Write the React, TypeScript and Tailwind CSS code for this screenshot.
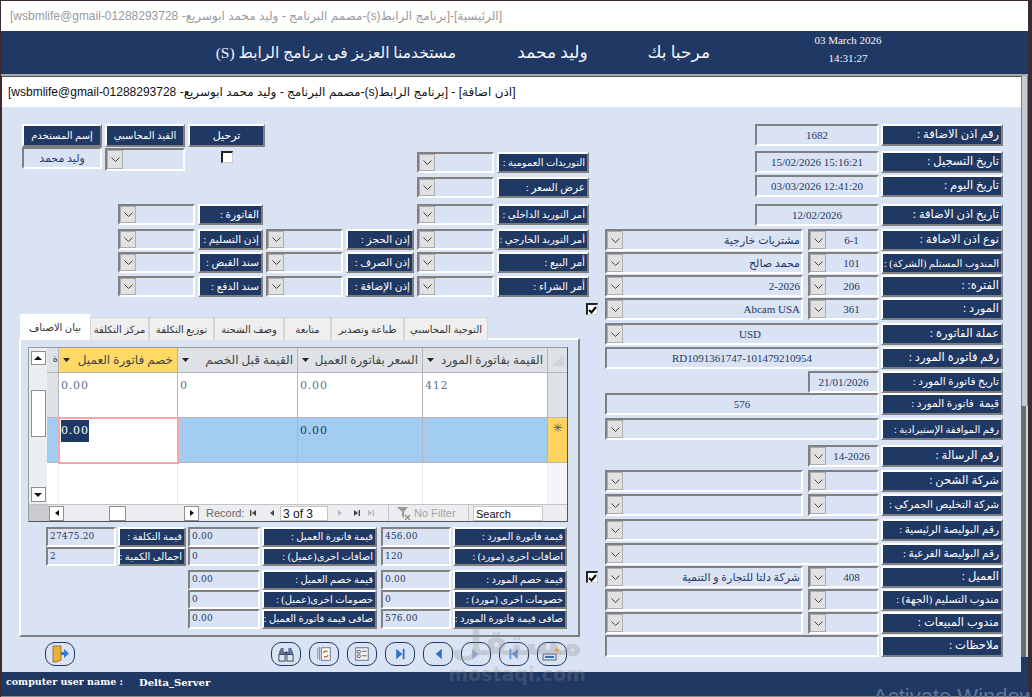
import { ReactNode } from "react";
import clsx from "clsx";

type FieldRow = {
  mt: string;
  label: string;
  kind: "narrow" | "code" | "pair" | "wide" | "wideCombo";
  code?: string;
  name?: string;
  check?: boolean;
};

const rows: FieldRow[] = [
  { mt: "mt-0", label: "رقم اذن الاضافة :", kind: "narrow", name: "1682" },
  { mt: "mt-[5px]", label: "تاريخ التسجيل :", kind: "narrow", name: "15/02/2026 15:16:21" },
  { mt: "mt-[2px]", label: "تاريخ اليوم :", kind: "narrow", name: "03/03/2026 12:41:20" },
  { mt: "mt-[7px]", label: "تاريخ اذن الاضافة :", kind: "narrow", name: "12/02/2026" },
  { mt: "mt-[3px]", label: "نوع اذن الاضافة :", kind: "pair", code: "6-1", name: "مشتريات خارجية" },
  { mt: "mt-px", label: "المندوب المستلم (الشركة) :", kind: "pair", code: "101", name: "محمد صالح" },
  { mt: "mt-px", label: "الفترة: :", kind: "pair", code: "206", name: "2-2026" },
  { mt: "mt-px", label: "المورد :", kind: "pair", code: "361", name: "Abcam USA", check: true },
  { mt: "mt-[3px]", label: "عملة الفاتورة :", kind: "wideCombo", name: "USD" },
  { mt: "mt-[2px]", label: "رقم فاتورة المورد :", kind: "wide", name: "RD1091361747-101479210954" },
  { mt: "mt-[2px]", label: "تاريخ فاتورة المورد :", kind: "code", name: "21/01/2026" },
  { mt: "mt-0", label: "قيمة  فاتورة المورد :", kind: "wide", name: "576" },
  { mt: "mt-[3px]", label: "رقم الموافقة الإستيرادية :", kind: "wideCombo" },
  { mt: "mt-[5px]", label: "رقم الرسالة :", kind: "code", name: "14-2026" },
  { mt: "mt-[3px]", label: "شركة الشحن :", kind: "pair" },
  { mt: "mt-[2px]", label: "شركة التخليص الجمركي :", kind: "pair" },
  { mt: "mt-[3px]", label: "رقم البوليصة الرئيسية :", kind: "wideCombo" },
  { mt: "mt-[2px]", label: "رقم البوليصة الفرعية :", kind: "wideCombo" },
  { mt: "mt-px", label: "العميل :", kind: "pair", code: "408", name: "شركة دلتا للتجارة و التنمية", check: true },
  { mt: "mt-px", label: "مندوب التسليم (الجهة) :", kind: "pair" },
  { mt: "mt-px", label: "مندوب المبيعات :", kind: "pair" },
  { mt: "mt-px", label: "ملاحظات :", kind: "wide" },
];

const tabs = [
  { text: "بيان الاصناف", w: "w-[70px]", active: true },
  { text: "مركز التكلفة", w: "w-[59px]" },
  { text: "توزيع التكلفة", w: "w-[65px]" },
  { text: "وصف الشحنة", w: "w-[70px]" },
  { text: "متابعة", w: "w-[47px]" },
  { text: "طباعة وتصدير", w: "w-[73px]" },
  { text: "التوجية المحاسبي", w: "w-[84px]" },
];

function Chevron() {
  return (
    <span className="flex h-full w-[16px] shrink-0 items-center justify-center border border-[#adadad] bg-[#e1e1e1]">
      <svg width="9" height="5" viewBox="0 0 9 5" fill="none" aria-hidden="true">
        <path d="M.5.5l4 4 4-4" stroke="#404040" />
      </svg>
    </span>
  );
}

function Box({
  className,
  text,
  combo,
  right,
}: {
  className?: string;
  text?: string;
  combo?: boolean;
  right?: boolean;
}) {
  return (
    <div
      className={clsx(
        "flex h-full items-center overflow-hidden border-2 border-t-[#808080] border-r-white border-b-white border-l-[#808080] text-[#1f3864]",
        className,
      )}
    >
      {combo && <Chevron />}
      <span
        dir="auto"
        className={clsx("flex-1 truncate px-px", right ? "text-right" : "text-center")}
      >
        {text}
      </span>
    </div>
  );
}

function Label({ className, children }: { className?: string; children: ReactNode }) {
  return (
    <div
      dir="rtl"
      className={clsx(
        "flex h-full items-center overflow-hidden border-2 border-t-white border-r-[#7f7f7f] border-b-[#7f7f7f] border-l-white bg-[#1f3864] whitespace-pre text-white",
        className,
      )}
    >
      {children}
    </div>
  );
}

function Check({ on, className }: { on?: boolean; className?: string }) {
  return (
    <span
      className={clsx(
        "flex h-[12px] w-[12px] shrink-0 items-center justify-center border-t-2 border-r border-b border-l-2 border-t-[#222] border-r-[#ccc] border-b-[#ccc] border-l-[#222] bg-white",
        className,
      )}
    >
      {on && (
        <svg width="9" height="8" viewBox="0 0 9 8" fill="none" aria-hidden="true">
          <path d="M1 4l2.5 2.5L8 1" stroke="#000" strokeWidth="2" />
        </svg>
      )}
    </span>
  );
}

function Pair({ label, boxW, labelW }: { label: string; boxW: string; labelW: string }) {
  return (
    <div className="flex h-full gap-[3px]">
      <Box combo className={boxW} />
      <Label className={clsx(labelW, label.length >= 20 ? "text-[10px]" : "text-[10.5px]")}>{label}</Label>
    </div>
  );
}

function labelSize(label: string) {
  if (label.length >= 26) return "text-[10px]";
  if (label.length >= 20) return "text-[10.5px]";
  return "text-[11.5px]";
}

function FieldLine({ row }: { row: FieldRow }) {
  return (
    <div className={clsx("flex h-[22px] items-center", row.mt)}>
      {row.check && <Check on className="-ml-[4px]" />}
      <div className="ml-auto flex h-full gap-[2px]">
        {row.kind === "narrow" && <Box className="w-[124px]" text={row.name} />}
        {row.kind === "code" && <Box combo={row.name === "14-2026"} className="w-[71px]" text={row.name} />}
        {row.kind === "wide" && <Box className="w-[274px]" text={row.name} />}
        {row.kind === "wideCombo" && <Box combo className="w-[274px]" text={row.name} />}
        {row.kind === "pair" && (
          <div className="flex h-full gap-[5px]">
            <Box combo right className="w-[198px]" text={row.name} />
            <Box combo className="w-[71px]" text={row.code} />
          </div>
        )}
        <Label className={clsx("w-[122px] pr-[2px]", labelSize(row.label))}>{row.label}</Label>
      </div>
    </div>
  );
}

function Header({ text, active }: { text: string; active?: boolean }) {
  return (
    <div
      className={clsx(
        "flex items-center justify-between border-r border-b border-[#b5b5b5] px-[4px] text-[12px] text-[#444]",
        active ? "bg-[#ffd966]" : "bg-[#dee2e6]",
      )}
    >
      <svg width="7" height="4" viewBox="0 0 7 4" aria-hidden="true">
        <path d="M0 0h7L3.5 4z" fill="#222" />
      </svg>
      <span dir="rtl" className="truncate">
        {text}
      </span>
    </div>
  );
}

function Value({ text, blue, className }: { text?: string; blue?: boolean; className?: string }) {
  return (
    <div
      className={clsx(
        "border-r border-b border-[#b5b5b5] px-[2px] pt-[6px] font-['DejaVu_Serif',serif] text-[11px] leading-[14px] tracking-[0.8px]",
        blue ? "text-[#1f3864]" : "text-[#5b7398]",
        className,
      )}
    >
      {text}
    </div>
  );
}

function Datasheet() {
  return (
    <div className="h-[175px] w-[540px] border border-t-[#9a9a9a] border-r-[#555] border-b-[#555] border-l-[#9a9a9a] bg-white">
      <div className="flex h-[156px]">
        <div className="flex w-[18px] flex-col items-center bg-[#eceff2] pt-[3px]">
          <button className="flex h-[14px] w-[15px] items-center justify-center border border-[#8f8f8f] bg-white">
            <svg width="8" height="4" viewBox="0 0 8 4" aria-hidden="true">
              <path d="M0 4h8L4 0z" fill="#111" />
            </svg>
          </button>
          <div className="mt-[25px] h-[47px] w-[15px] border border-[#8f8f8f] bg-white" />
          <button className="mt-[50px] flex h-[15px] w-[15px] items-center justify-center border border-[#8f8f8f] bg-white">
            <svg width="8" height="4" viewBox="0 0 8 4" aria-hidden="true">
              <path d="M0 0h8L4 4z" fill="#111" />
            </svg>
          </button>
        </div>
        <div className="grid flex-1 grid-cols-[12px_119px_120px_125px_125px_19px] grid-rows-[25px_45px_45px_41px]">
          <div className="overflow-hidden border-r border-b border-[#b5b5b5] bg-[#dee2e6] pt-[3px] text-right text-[10px] text-[#444]">
            ة
          </div>
          <Header active text="خصم فاتورة العميل" />
          <Header text="القيمة قبل الخصم" />
          <Header text="السعر بفاتورة العميل" />
          <Header text="القيمة بفاتورة المورد" />
          <div className="flex items-center justify-center border-b border-[#b5b5b5] bg-[#dee2e6]">
            <svg width="12" height="12" viewBox="0 0 12 12" aria-hidden="true">
              <path d="M12 0v12H0z" fill="#cfd4da" />
            </svg>
          </div>

          <Value className="bg-[#dee2e6]" />
          <Value text="0.00" />
          <Value text="0" />
          <Value text="0.00" />
          <Value text="412" />
          <div className="border-b border-[#b5b5b5] bg-[#dee2e6]" />

          <Value className="bg-[#a2cdf0]" />
          <div className="relative -m-px border-2 border-[#f4a6ac] bg-white p-px">
            <span className="block w-[28px] bg-[#1f3864] font-['DejaVu_Serif',serif] text-[11px] leading-[22px] tracking-[0.8px] text-white">
              0.00
            </span>
          </div>
          <Value className="bg-[#a2cdf0]" />
          <Value blue className="bg-[#a2cdf0]" text="0.00" />
          <Value className="bg-[#a2cdf0]" />
          <div className="border-b border-[#b5b5b5] bg-[#ffd45e] pt-[3px] text-center text-[12px] leading-[14px] text-[#555]">
            ✳
          </div>

          <div className="border-r border-[#eee]" />
          <div className="border-r border-[#eee]" />
          <div className="border-r border-[#eee]" />
          <div className="border-r border-[#eee]" />
          <div className="border-r border-[#eee]" />
          <div className="bg-[#f3f5f8]" />
        </div>
      </div>
      <RecordBar />
    </div>
  );
}

function Arrow({ dir, bar, tone }: { dir: "l" | "r"; bar?: boolean; tone: string }) {
  return (
    <svg width="8" height="8" viewBox="0 0 8 8" aria-hidden="true">
      <path d={dir === "l" ? "M6 1v6L2 4z" : "M2 1v6l4-3z"} fill={tone} />
      {bar && <path d={dir === "l" ? "M0 1h1.4v6H0z" : "M6.6 1H8v6H6.6z"} fill={tone} />}
    </svg>
  );
}

function RecordBar() {
  return (
    <div className="flex h-[17px] items-center border-t border-[#c4c4c4] bg-[#ebedf0] font-['Liberation_Sans',sans-serif] text-[11px] text-[#666]">
      <div className="h-full w-[20px] bg-[#c9cbce]" />
      <span className="flex h-[15px] w-[15px] items-center justify-center border border-[#8f8f8f] bg-white">
        <Arrow dir="l" tone="#111" />
      </span>
      <span className="ml-[45px] h-[15px] w-[17px] border border-[#8f8f8f] bg-white" />
      <span className="ml-[58px] flex h-[15px] w-[15px] items-center justify-center border border-[#8f8f8f] bg-white">
        <Arrow dir="r" tone="#111" />
      </span>
      <span className="ml-[7px] w-[44px]">Record:</span>
      <Arrow dir="l" bar tone="#444" />
      <span className="ml-[10px]">
        <Arrow dir="l" tone="#444" />
      </span>
      <span className="ml-[4px] h-[15px] w-[48px] border border-[#c4c4c4] bg-white pl-[2px] text-[12px] leading-[14px] text-[#111]">
        3 of 3
      </span>
      <span className="ml-[8px]">
        <Arrow dir="r" tone="#bbb" />
      </span>
      <span className="ml-[8px]">
        <Arrow dir="r" bar tone="#444" />
      </span>
      <span className="ml-[6px]">
        <Arrow dir="r" bar tone="#bbb" />
      </span>
      <span className="ml-[14px] h-full w-px bg-[#c4c4c4]" />
      <svg className="ml-[8px]" width="14" height="13" viewBox="0 0 14 13" aria-hidden="true">
        <path d="M0 0h11L7 5v6L5 9V5z" fill="#9a9a9a" />
        <path d="M8 8l5 5M13 8l-5 5" stroke="#8a8a8a" strokeWidth="1.2" />
      </svg>
      <span className="ml-[3px] w-[46px] text-[#a6a6a6]">No Filter</span>
      <span className="ml-[8px] h-full w-px bg-[#c4c4c4]" />
      <span className="ml-[4px] h-[15px] w-[70px] border border-[#c4c4c4] bg-white pl-[2px] text-[11px] leading-[14px] text-[#111]">
        Search
      </span>
    </div>
  );
}

function SumRow({
  label,
  value,
  boxW,
  labelW,
}: {
  label: string;
  value: string;
  boxW: string;
  labelW: string;
}) {
  return (
    <div className="flex h-[19.5px] gap-[2px]">
      <div
        className={clsx(
          "flex h-full items-center border-2 border-t-[#808080] border-r-white border-b-white border-l-[#808080] pl-[2px] font-['DejaVu_Serif',serif] text-[9px] tracking-[0.2px] text-[#1f3864]",
          boxW,
        )}
      >
        {value}
      </div>
      <Label className={clsx(labelW, "pr-[2px] text-[10px]")}>{label}</Label>
    </div>
  );
}

function SumGroup({
  rows,
  boxW,
  labelW,
  className,
}: {
  rows: [string, string][];
  boxW: string;
  labelW: string;
  className?: string;
}) {
  return (
    <div className={clsx("flex flex-col", className)}>
      {rows.map(([label, value]) => (
        <SumRow key={label} label={label} value={value} boxW={boxW} labelW={labelW} />
      ))}
    </div>
  );
}

function RoundButton({ className, children }: { className?: string; children: ReactNode }) {
  return (
    <button
      className={clsx(
        "flex h-[24px] w-[30px] items-center justify-center rounded-[10px] border border-[#1f3864]",
        className,
      )}
    >
      {children}
    </button>
  );
}

function ExitIcon() {
  return (
    <svg width="18" height="18" viewBox="0 0 18 18" aria-hidden="true">
      <path d="M2 1h8v14l-5 2H2z" fill="#e8b13c" stroke="#8a6414" strokeWidth=".8" />
      <path d="M10 7h3V4l5 4.5L13 13v-3h-3z" fill="#2f7fd6" />
    </svg>
  );
}

function BinocularsIcon() {
  return (
    <svg width="16" height="16" viewBox="0 0 17 17" aria-hidden="true">
      <path d="M3 2h3v4h1v4H1V7z" fill="#5b7398" />
      <path d="M11 2h3l2 5v3h-6V6h1z" fill="#5b7398" />
      <rect x="1" y="9" width="6.5" height="7" fill="#dfe6f0" stroke="#33415c" />
      <rect x="9.5" y="9" width="6.5" height="7" fill="#dfe6f0" stroke="#33415c" />
      <rect x="7" y="6" width="3" height="3" fill="#33415c" />
    </svg>
  );
}

function PagesIcon() {
  return (
    <svg width="16" height="16" viewBox="0 0 18 18" fill="none" aria-hidden="true">
      <path d="M2 2v13M4 1v15" stroke="#7b8aa5" />
      <rect x="6" y="2" width="10" height="14" fill="#fff" stroke="#5b6b88" />
      <path d="M8.5 8a2.6 2.6 0 0 1 4.5-1.5" stroke="#c2591f" strokeWidth="1.4" />
      <path d="M13.5 10a2.6 2.6 0 0 1-4.5 1.5" stroke="#c2591f" strokeWidth="1.4" />
    </svg>
  );
}

function FormIcon() {
  return (
    <svg width="16" height="16" viewBox="0 0 18 18" fill="none" aria-hidden="true">
      <rect x="2" y="2" width="14" height="14" fill="#f3f3ee" stroke="#59657c" />
      <path d="M4 5h3v3H4zM4 10h3v3H4z" stroke="#59657c" />
      <path d="M9 6h5M9 11h5" stroke="#59657c" strokeWidth="1.2" />
    </svg>
  );
}

function NavIcon({ dir, bar, tone }: { dir: "l" | "r"; bar?: boolean; tone: string }) {
  return (
    <svg width="12" height="12" viewBox="0 0 16 16" aria-hidden="true">
      <path d={dir === "l" ? "M13 1v14L5 8z" : "M3 1v14l8-7z"} fill={tone} />
      {bar && <path d={dir === "l" ? "M2 1h2.4v14H2z" : "M11.6 1H14v14h-2.4z"} fill={tone} />}
    </svg>
  );
}

function NewRecordIcon() {
  return (
    <svg width="20" height="18" viewBox="0 0 20 18" aria-hidden="true">
      <rect x="1" y="9" width="13" height="6" fill="#d8deea" stroke="#5b6b88" />
      <path d="M3 12h9" stroke="#2f6fc4" strokeWidth="2" />
      <path d="M15 1l1 3 3 1-3 1-1 3-1-3-3-1 3-1z" fill="#e8b13c" />
    </svg>
  );
}

export default function App() {
  return (
    <div className="relative h-[697px] w-[1032px] overflow-hidden bg-[#3b2a2e] font-['Liberation_Serif','DejaVu_Sans',sans-serif] text-[11px]">
      <div className="mt-px ml-px flex h-[696px] w-[1027px] flex-col">
        <div className="flex h-[30px] items-center bg-white pl-[9px] text-[12px] text-[#9a9a9a]">
          <span dir="rtl" className="font-['Liberation_Sans','DejaVu_Sans',sans-serif]">
            [الرئيسية]-[برنامج الرابط(s)-مصمم البرنامج - وليد محمد ابوسريع- wsbmlife@gmail-01288293728]
          </span>
        </div>

        <div className="flex h-[43px] items-center bg-[#1f3864] text-[#f4f6fa]">
          <span dir="rtl" className="ml-[216px] w-[239px] text-center text-[15.5px] whitespace-nowrap">
            مستخدمنا العزيز فى برنامج الرابط (S)
          </span>
          <span dir="rtl" className="ml-[61px] w-[71px] text-center text-[17px] whitespace-nowrap">
            وليد محمد
          </span>
          <span dir="rtl" className="ml-[62px] w-[60px] text-center text-[17px] whitespace-nowrap">
            مرحبا بك
          </span>
          <div className="ml-[97px] flex w-[82px] flex-col items-center gap-[6px] pb-[7px] text-[11px] leading-[12px]">
            <span>03 March 2026</span>
            <span>14:31:27</span>
          </div>
        </div>
        <div className="h-[2px] bg-[#a6a8ad]" />

        <div className="flex h-[596px] pl-px">
          <div className="flex w-[1019px] flex-col border-t border-[#555]">
            <div className="flex h-[30px] items-center bg-white pl-[6px] text-[12px] text-[#111]">
              <span dir="rtl" className="font-['Liberation_Sans','DejaVu_Sans',sans-serif]">
                [اذن اضافة] - [برنامج الرابط(s)-مصمم البرنامج - وليد محمد ابوسريع- wsbmlife@gmail-01288293728]
              </span>
            </div>

            <div className="flex h-[565px] bg-[#dae3f3] pt-[17px]">
              <div className="flex w-[588px] flex-col">
                <div className="flex h-[74px] justify-between pr-px pl-[20px]">
                  <div className="flex gap-[3px]">
                    <div className="w-[80px]">
                      <Label className="!h-[23px] justify-center text-[10px]">إسم المستخدم</Label>
                      <Box className="!h-[22px]" text="وليد محمد" />
                    </div>
                    <div className="w-[80px]">
                      <Label className="!h-[23px] justify-center text-[10px]">القيد المحاسبي</Label>
                      <Box combo className="mt-px !h-[23px]" />
                    </div>
                    <div className="flex w-[77px] flex-col items-center">
                      <Label className="!h-[23px] w-full justify-center text-[11px]">ترحيل</Label>
                      <Check className="mt-[4px]" />
                    </div>
                  </div>
                  <div className="flex w-[172px] flex-col pt-[28px]">
                    <div className="h-[21px]">
                      <Pair label="التوريدات العمومية :" boxW="w-[77px]" labelW="w-[92px] pr-[2px]" />
                    </div>
                    <div className="mt-[4px] h-[21px]">
                      <Pair label="عرض السعر :" boxW="w-[77px]" labelW="w-[92px] pr-[2px]" />
                    </div>
                  </div>
                </div>

                <div className="mt-[6px] flex flex-col pr-px">
                  <div className="flex h-[21px] justify-end gap-[3px]">
                    <Pair label="الفاتورة :" boxW="w-[77px]" labelW="w-[65px] pr-[2px]" />
                    <div className="w-[148px]" />
                    <Pair label="أمر التوريد الداخلي :" boxW="w-[77px]" labelW="w-[92px] pr-[2px]" />
                  </div>
                  <div className="mt-[4px] flex h-[21px] justify-end gap-[3px]">
                    <Pair label="إذن التسليم :" boxW="w-[77px]" labelW="w-[65px] pr-[2px]" />
                    <Pair label="إذن الحجز :" boxW="w-[77px]" labelW="w-[68px] pr-[2px]" />
                    <Pair label="أمر التوريد الخارجي :" boxW="w-[77px]" labelW="w-[92px] pr-[2px]" />
                  </div>
                  <div className="mt-[2px] flex h-[21px] justify-end gap-[3px]">
                    <Pair label="سند القبض :" boxW="w-[77px]" labelW="w-[65px] pr-[2px]" />
                    <Pair label="إذن الصرف :" boxW="w-[77px]" labelW="w-[68px] pr-[2px]" />
                    <Pair label="أمر البيع :" boxW="w-[77px]" labelW="w-[92px] pr-[2px]" />
                  </div>
                  <div className="mt-[3px] flex h-[21px] justify-end gap-[3px]">
                    <Pair label="سند الدفع :" boxW="w-[77px]" labelW="w-[65px] pr-[2px]" />
                    <Pair label="إذن الإضافة :" boxW="w-[77px]" labelW="w-[68px] pr-[2px]" />
                    <Pair label="أمر الشراء :" boxW="w-[77px]" labelW="w-[92px] pr-[2px]" />
                  </div>
                </div>

                <div className="relative z-10 mt-[17px] ml-[18px] flex h-[26px] items-end">
                  {tabs.map((t) => (
                    <div
                      key={t.text}
                      dir="rtl"
                      className={clsx(
                        "flex items-center justify-center text-[10px] whitespace-nowrap text-[#333]",
                        t.w,
                        t.active
                          ? "h-[26px] bg-white text-[10.5px]"
                          : "h-[23px] border border-b-0 border-[#d4d4d4] bg-[#efefef]",
                      )}
                    >
                      {t.text}
                    </div>
                  ))}
                </div>
                <div className="ml-[17px] h-[299px] w-[561px] -translate-y-[2px] border-2 border-t-white border-r-[#808080] border-b-[#808080] border-l-white pt-[7px] pl-[7px]">
                  <Datasheet />
                  <div className="mt-[5px] ml-[18px] flex">
                    <SumGroup
                      boxW="w-[70px]"
                      labelW="w-[68px]"
                      rows={[
                        ["قيمة التكلفة :", "27475.20"],
                        ["اجمالى الكمية :", "2"],
                      ]}
                    />
                    <div className="ml-[2px] flex flex-col">
                      <SumGroup
                        boxW="w-[72px]"
                        labelW="w-[115px]"
                        rows={[
                          ["قيمة فاتورة العميل :", "0.00"],
                          ["اضافات اخرى(عميل) :", "0"],
                        ]}
                      />
                      <SumGroup
                        className="mt-[4px]"
                        boxW="w-[72px]"
                        labelW="w-[115px]"
                        rows={[
                          ["قيمة خصم العميل :", "0.00"],
                          ["خصومات اخرى(عميل) :", "0"],
                          ["صافى قيمة فاتورة العميل :", "0.00"],
                        ]}
                      />
                    </div>
                    <div className="ml-[4px] flex flex-col">
                      <SumGroup
                        boxW="w-[70px]"
                        labelW="w-[114px]"
                        rows={[
                          ["قيمة فاتورة المورد :", "456.00"],
                          ["اضافات اخرى (مورد) :", "120"],
                        ]}
                      />
                      <SumGroup
                        className="mt-[4px]"
                        boxW="w-[70px]"
                        labelW="w-[114px]"
                        rows={[
                          ["قيمة خصم المورد :", "0.00"],
                          ["خصومات اخرى (مورد) :", "0"],
                          ["صافى قيمة فاتورة المورد :", "576.00"],
                        ]}
                      />
                    </div>
                  </div>
                </div>

                <div className="mt-[3px] ml-[43px] flex">
                  <RoundButton>
                    <ExitIcon />
                  </RoundButton>
                  <div className="ml-[196px] flex gap-[8px]">
                    <RoundButton>
                      <BinocularsIcon />
                    </RoundButton>
                    <RoundButton>
                      <PagesIcon />
                    </RoundButton>
                    <RoundButton>
                      <FormIcon />
                    </RoundButton>
                    <RoundButton>
                      <NavIcon dir="r" bar tone="#2f6fc4" />
                    </RoundButton>
                    <RoundButton>
                      <NavIcon dir="l" tone="#2f6fc4" />
                    </RoundButton>
                    <RoundButton>
                      <NavIcon dir="r" tone="#8fb4e0" />
                    </RoundButton>
                    <RoundButton>
                      <NavIcon dir="l" bar tone="#5f93d6" />
                    </RoundButton>
                    <RoundButton>
                      <NewRecordIcon />
                    </RoundButton>
                  </div>
                </div>
              </div>

              <div className="flex w-[413px] flex-col">
                {rows.map((r) => (
                  <FieldLine key={r.label} row={r} />
                ))}
              </div>
            </div>
          </div>

          <div className="flex w-[7px] flex-col">
            <div className="h-[330px] border-x border-[#7d7f85] bg-[#c5cad3]" />
            <div className="h-[251px] border-r-2 border-[#cfd2d8] bg-[#6d6d6d]" />
            <div className="flex-1 bg-[#1f3864]" />
          </div>
        </div>

        <div className="flex h-[24px] items-center bg-[#1f3864] pb-[4px] font-['DejaVu_Serif',serif] text-[9.5px] font-bold text-white">
          <span className="ml-[5px] w-[133px]">computer user name :</span>
          <span className="text-[10px]">Delta_Server</span>
        </div>
        <div className="h-px bg-[#8a8a8a]" />
      </div>

      <div className="pointer-events-none absolute top-[622px] left-[454px] flex w-[126px] flex-col items-center text-[#8b8b8b]/30">
        <span dir="rtl" className="text-[36px] leading-[42px] font-bold">
          مستقل
        </span>
        <span className="font-['DejaVu_Sans',sans-serif] text-[19px] leading-[20px] font-bold">mostaqi.com</span>
      </div>
      <span className="pointer-events-none absolute top-[684px] left-[873px] font-['Liberation_Sans',sans-serif] text-[22px] leading-[26px] whitespace-nowrap text-[#5f7498]">
        Activate Windows
      </span>
    </div>
  );
}
